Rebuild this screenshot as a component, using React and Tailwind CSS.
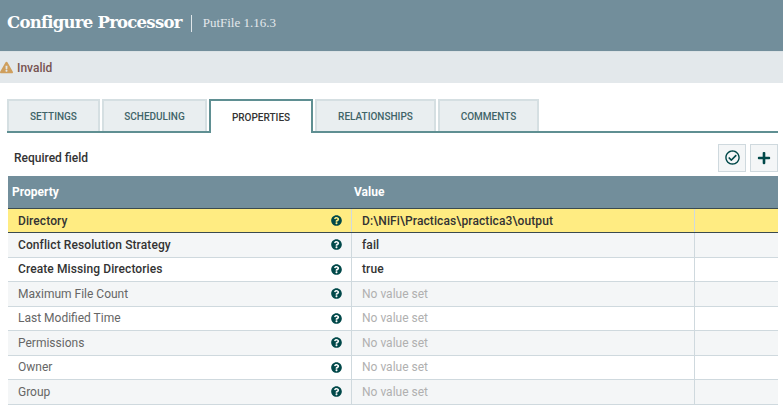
import { FaExclamationTriangle, FaPlus, FaQuestionCircle, FaRegCheckCircle } from 'react-icons/fa';

const tabs = [
  { name: 'SETTINGS', width: 'w-[93px]' },
  { name: 'SCHEDULING', width: 'w-[105px]' },
  { name: 'PROPERTIES', width: 'w-[104px]', active: true },
  { name: 'RELATIONSHIPS', width: 'w-[121px]' },
  { name: 'COMMENTS', width: 'w-[101px]' },
];

const rows = [
  { name: 'Directory', value: 'D:\\NiFi\\Practicas\\practica3\\output', required: true, selected: true },
  { name: 'Conflict Resolution Strategy', value: 'fail', required: true },
  { name: 'Create Missing Directories', value: 'true', required: true },
  { name: 'Maximum File Count' },
  { name: 'Last Modified Time' },
  { name: 'Permissions' },
  { name: 'Owner' },
  { name: 'Group' },
];

function Row({ row, index }) {
  const bg = row.selected ? 'bg-[#ffec82]' : index % 2 === 1 ? 'bg-[#f4f6f7]' : 'bg-white';
  const border = row.selected ? 'border-y border-[#3a4a4f] h-[25px]' : 'border-b border-[#cfd9de] h-[24.5px]';
  const nameColor = row.required ? 'font-medium tracking-[0.1px] text-[#333]' : 'text-[#666]';
  return (
    <div className={`flex items-center ${bg} ${border}`}>
      <div className={`flex h-full w-[343px] items-center justify-between pl-[10px] pr-[9px] text-[12px] ${nameColor}`}>
        <span>{row.name}</span>
        <FaQuestionCircle className="text-[#004849]" size={11} />
      </div>
      <div className={`flex h-full w-[343px] items-center border-l border-[#cfd9de] pl-[10px] text-[12px] ${row.value ? 'font-medium tracking-[0.1px] text-[#333]' : 'text-[#b0b0b0]'}`}>
        {row.value || 'No value set'}
      </div>
      <div className="h-full flex-1 border-l border-[#cfd9de]" />
    </div>
  );
}

export default function App() {
  return (
    <div className="h-[412px] w-[783px] overflow-hidden bg-white font-['Roboto',sans-serif]">
      <div className="flex h-[51px] items-center bg-[#728e9b] pb-[5px] pl-[7px] text-white">
        <span className="font-['DejaVu_Serif',serif] text-[16.5px] font-bold tracking-[-0.75px]">Configure Processor</span>
        <span className="ml-[9px] mr-[11px] h-[17px] w-px bg-[#dfe6e9]" />
        <span className="font-['Liberation_Serif',serif] text-[13px] text-[#e3e8eb]">PutFile 1.16.3</span>
      </div>

      <div className="flex h-[32px] items-center gap-[4px] border-t border-[#dbe2e5] bg-[#e3e8eb] text-[12px] font-medium text-[#775351]">
        <FaExclamationTriangle className="text-[#cf9f5d]" size={13} />
        <span>Invalid</span>
      </div>

      <div className="ml-[7px] mr-[5px] mt-[16px] flex h-[34px] items-end gap-[2px] border-b-2 border-[#5f8f92]">
        {tabs.map((tab) => (
          <div
            key={tab.name}
            className={
              tab.active
                ? `${tab.width} -mb-[2px] flex h-[34px] items-center justify-center border-x-2 border-t-2 border-[#5f8f92] bg-white pt-[1px] text-[10px] font-medium text-[#333]`
                : `${tab.width} flex h-[32px] items-center justify-center border-x-2 border-t-2 border-[#d5dfe2] bg-[#e9eef0] pt-[1px] text-[10px] font-medium text-[#3f6468]`
            }
          >
            {tab.name}
          </div>
        ))}
      </div>

      <div className="ml-[14px] mr-[5px] mt-[10px] flex h-[29px] items-center justify-between">
        <span className="text-[12px] font-medium text-[#333]">Required field</span>
        <div className="flex gap-[4px]">
          <div className="flex h-[28px] w-[28px] items-center justify-center border border-[#cfd9de] bg-[#f4f6f7] text-[#004849]">
            <FaRegCheckCircle size={15} />
          </div>
          <div className="flex h-[28px] w-[28px] items-center justify-center border border-[#cfd9de] bg-[#f4f6f7] text-[#004849]">
            <FaPlus size={14} />
          </div>
        </div>
      </div>

      <div className="ml-[8px] mr-[5px] mt-[4px]">
        <div className="flex h-[32px] items-center bg-[#728e9b] text-[12px] font-bold text-white">
          <div className="w-[343px] pl-[4px]">Property</div>
          <div className="pl-[3px]">Value</div>
        </div>
        {rows.map((row, index) => (
          <Row key={row.name} row={row} index={index} />
        ))}
      </div>
    </div>
  );
}
